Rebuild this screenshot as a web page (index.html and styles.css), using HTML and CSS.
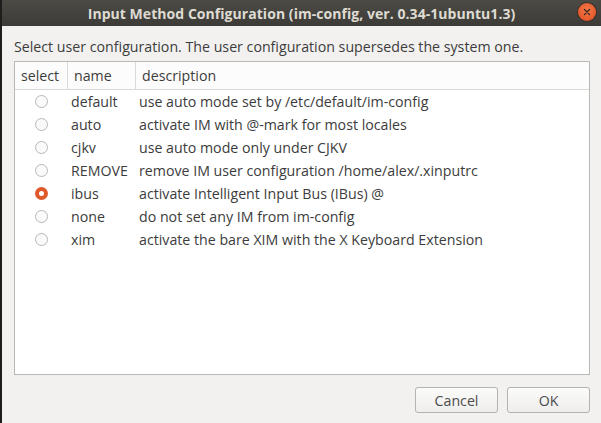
FILE: index.html
```html
<!DOCTYPE html>
<html>
<head>
<meta charset="utf-8">
<link rel="stylesheet" href="styles.css">
</head>
<body>
<div class="strip"></div>
<div class="window">
  <div class="titlebar">
    <span class="title">Input Method Configuration (im-config, ver. 0.34-1ubuntu1.3)</span>
    <span class="close"><svg width="10" height="10" viewBox="0 0 10 10"><path d="M2.5 2.5L7.5 7.5M7.5 2.5L2.5 7.5" stroke="#3a2a22" stroke-width="1.4" stroke-linecap="round"/></svg></span>
  </div>
  <div class="content">
    <p class="intro">Select user configuration. The user configuration supersedes the system one.</p>
    <div class="frame">
      <div class="row head">
        <div class="c1">select</div>
        <div class="c2">name</div>
        <div class="c3">description</div>
      </div>
      <div class="row"><div class="c1"><span class="radio"></span></div><div class="c2">default</div><div class="c3">use auto mode set by /etc/default/im-config</div></div>
      <div class="row"><div class="c1"><span class="radio"></span></div><div class="c2">auto</div><div class="c3">activate IM with @-mark for most locales</div></div>
      <div class="row"><div class="c1"><span class="radio"></span></div><div class="c2">cjkv</div><div class="c3">use auto mode only under CJKV</div></div>
      <div class="row"><div class="c1"><span class="radio"></span></div><div class="c2">REMOVE</div><div class="c3">remove IM user configuration /home/alex/.xinputrc</div></div>
      <div class="row"><div class="c1"><span class="radio on"></span></div><div class="c2">ibus</div><div class="c3">activate Intelligent Input Bus (IBus) @</div></div>
      <div class="row"><div class="c1"><span class="radio"></span></div><div class="c2">none</div><div class="c3">do not set any IM from im-config</div></div>
      <div class="row"><div class="c1"><span class="radio"></span></div><div class="c2">xim</div><div class="c3">activate the bare XIM with the X Keyboard Extension</div></div>
    </div>
    <div class="buttons">
      <button class="btn">Cancel</button>
      <button class="btn">OK</button>
    </div>
  </div>
</div>
</body>
</html>
```
FILE: styles.css
```css
html, body {
  margin: 0;
  padding: 0;
  height: 100%;
}
body {
  display: flex;
  background: #f2f1f0;
  font-family: "Open Sans", sans-serif;
  font-size: 14.2px;
  color: #3c3c3c;
  overflow: hidden;
}
.strip {
  width: 2px;
  background: #1d1d1c;
  flex: none;
}
.window {
  flex: 1;
  display: flex;
  flex-direction: column;
}
.titlebar {
  height: 26px;
  background: linear-gradient(#4b4a45, #3c3b37);
  display: flex;
  align-items: center;
  justify-content: center;
  position: relative;
}
.title {
  color: #dfdbd2;
  font-weight: bold;
  font-size: 14px;
  letter-spacing: 0.05px;
}
.close {
  position: absolute;
  right: 5px;
  top: 3px;
  width: 18px;
  height: 18px;
  border-radius: 50%;
  background: radial-gradient(circle at 50% 40%, #f47a4a, #dd4a1c);
  box-shadow: 0 0 0 1px #3a2f2a;
  display: flex;
  align-items: center;
  justify-content: center;
}
.content {
  flex: 1;
  display: flex;
  flex-direction: column;
  padding: 0 11px 0 12px;
}
.intro {
  margin: 12px 0 0 0;
  height: 23px;
  line-height: 17px;
  white-space: nowrap;
}
.frame {
  height: 312px;
  border: 1px solid #b9b8b5;
  background: #ffffff;
}
.row {
  display: grid;
  grid-template-columns: 53px 68px 1fr;
  height: 23px;
  align-items: center;
  white-space: nowrap;
}
.row.head {
  height: 27px;
  background: #fcfcfc;
  border-bottom: 1px solid #dad9d7;
}
.head > div {
  padding-left: 6px;
  height: 27px;
  line-height: 27px;
}
.head .c1, .head .c2 {
  border-right: 1px solid #dad9d7;
}
.row .c2, .row .c3 {
  padding-left: 3px;
}
.row.head .c2, .row.head .c3 {
  padding-left: 6px;
}
.c1 {
  display: flex;
  align-items: center;
}
.radio {
  width: 11px;
  height: 11px;
  border: 1px solid #b8b8b6;
  border-radius: 50%;
  margin-left: 20px;
  background: #fafafa;
}
.radio.on {
  width: 5px;
  height: 5px;
  border: 4px solid #e0592a;
  background: #ffffff;
}
.buttons {
  display: flex;
  justify-content: flex-end;
  gap: 9px;
  margin-top: 12px;
}
.btn {
  width: 83px;
  height: 26px;
  border: 1px solid #b4b3af;
  border-radius: 3px;
  background: linear-gradient(#fbfbfa, #eeedec);
  font-family: "Open Sans", sans-serif;
  font-size: 14.2px;
  color: #4c4c4c;
  padding: 0;
}
```
